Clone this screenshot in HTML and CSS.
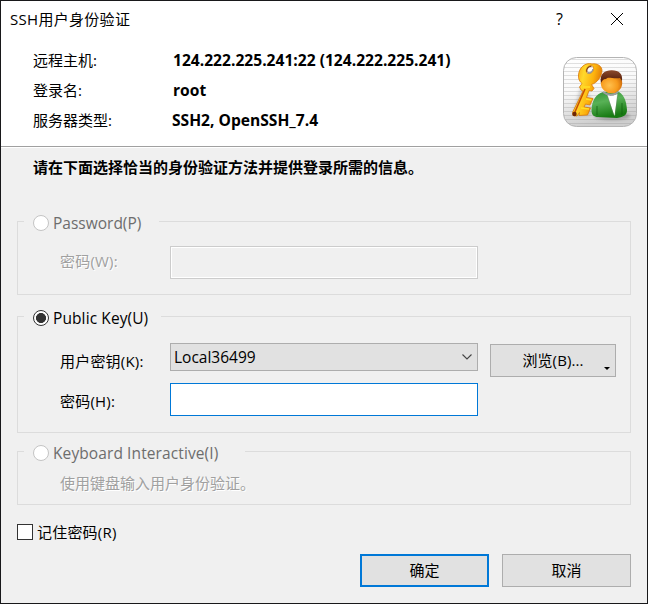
FILE: index.html
```html
<!DOCTYPE html>
<html lang="zh-CN">
<head>
<meta charset="utf-8">
<title>SSH用户身份验证</title>
<link rel="stylesheet" href="styles.css">
</head>
<body>
<main class="dialog">
  <header class="top">
    <div class="titlebar">
      <span class="title">SSH用户身份验证</span>
      <span class="help">?</span>
      <svg class="close" width="12" height="12" viewBox="0 0 12 12"><path d="M0 0L12 12M12 0L0 12" stroke="#000" stroke-width="1"/></svg>
    </div>
    <div class="summary">
      <dl class="info">
        <dt>远程主机:</dt><dd class="host">124.222.225.241:22 (124.222.225.241)</dd>
        <dt>登录名:</dt><dd>root</dd>
        <dt>服务器类型:</dt><dd class="server">SSH2, OpenSSH_7.4</dd>
      </dl>
      <svg class="badge" width="74" height="70" viewBox="0 0 74 70">
        <defs>
          <linearGradient id="plate" x1="0" y1="0" x2="0.25" y2="1"><stop offset="0" stop-color="#fff"/><stop offset=".5" stop-color="#f9f9f9"/><stop offset="1" stop-color="#cecece"/></linearGradient>
          <pattern id="lines" width="4" height="4" patternUnits="userSpaceOnUse"><rect y="2" width="4" height="1" fill="#777" opacity=".22"/></pattern>
          <linearGradient id="gold" x1="0" y1="0" x2="1" y2=".4"><stop offset="0" stop-color="#f58a08"/><stop offset=".4" stop-color="#ffd92b"/><stop offset=".7" stop-color="#fdb20e"/><stop offset="1" stop-color="#d96a04"/></linearGradient>
          <radialGradient id="face" cx=".4" cy=".62" r=".65"><stop offset="0" stop-color="#ffc04d"/><stop offset=".6" stop-color="#f79a1c"/><stop offset="1" stop-color="#c9660a"/></radialGradient>
          <linearGradient id="hair" x1="0" y1="0" x2="0" y2="1"><stop offset="0" stop-color="#8b4a2c"/><stop offset="1" stop-color="#481404"/></linearGradient>
          <linearGradient id="coat" x1="0" y1="0" x2=".3" y2="1"><stop offset="0" stop-color="#2c8f32"/><stop offset=".45" stop-color="#58b156"/><stop offset="1" stop-color="#177a12"/></linearGradient>
          <filter id="soft" x="-20%" y="-20%" width="140%" height="140%"><feGaussianBlur stdDeviation="1.5"/></filter>
        </defs>
        <rect x=".5" y=".5" width="73" height="69" rx="13" fill="url(#plate)"/>
        <rect x=".5" y=".5" width="73" height="69" rx="13" fill="url(#lines)" stroke="#b4b4b4"/>
        <ellipse cx="49" cy="59" rx="18" ry="4" fill="#555" opacity=".4" filter="url(#soft)"/>
        <path d="M17 31L10 57L14 60L27 59L29 50L24 47L29 42L25 37L27 33Z" fill="#777" opacity=".3" filter="url(#soft)"/>
        <path fill="url(#gold)" stroke="#d97807" stroke-width=".8" stroke-linejoin="round" fill-rule="evenodd" d="M29 7C22 5 16 11 15.500 18C15 22 17 25 19 26.500L16.500 30L18 33L20 34L9.500 55.500L10 58.500L14 59L16.500 55.500L16 58.500L24.500 58L27.500 51L21 50L22.500 47L27 48L30 41.500L23.500 40.500L26 33.500L29 34L31 31.500L28.500 27.500C34 26 38.500 20 39 14C39.200 9 34 6 29 7ZM26 9C29 7.500 31 9.500 30.500 12.500C30 15.500 26.500 17.500 24.300 16C22.200 14.300 23.500 10.500 26 9Z"/>
        <path d="M24 15C22.800 12 26 8.500 28.500 9.500" fill="none" stroke="#8a4a10" stroke-width="1.200"/>
        <path d="M24.500 15.500C27 17 29.500 15 30 12" fill="none" stroke="#999" stroke-width="1.500"/>
        <path d="M22 32L11.500 56" stroke="#c64c04" stroke-width="1.600"/>
        <path d="M20 30H27M18 51L26 52M23 42L28.500 43" stroke="#ffdf26" stroke-width="1.500"/>
        <circle cx="11.500" cy="57" r="2.200" fill="#6d2606"/>
        <path d="M40 35C33 37 29 43 28.500 53C28.400 58 31 60 35 60L54 61C61 60 64 58 64 53C63.500 43 60 36 54 34Z" fill="url(#coat)"/>
        <path d="M44 37L51.500 59L54.500 37L50 38.500Z" fill="#fff"/>
        <path d="M44 37L50.500 58M54.500 37L52.500 58" stroke="#777" stroke-width=".7" opacity=".45"/>
        <path d="M34 49V58M59 46V58" stroke="#105f10" stroke-width="1.200" opacity=".6"/>
        <path d="M40 35Q48 41 55 35" fill="none" stroke="#9a9ca0" stroke-width="1.800"/>
        <ellipse cx="48.500" cy="26" rx="10.700" ry="10.300" fill="url(#face)"/>
        <path d="M38 26C36 16 43 13 49 13.300C56 13.300 60 17 59 24L57 21C49 22 45 19 43 22C40 22 39 24 38 26Z" fill="url(#hair)"/>
      </svg>
    </div>
  </header>

  <form class="body">
    <p class="prompt">请在下面选择恰当的身份验证方法并提供登录所需的信息。</p>

    <section class="group password">
      <div class="legend disabled"><i class="radio"></i><span class="latin">Password(P)</span></div>
      <div class="row">
        <span class="label etched">密码(W):</span>
        <div class="field off"></div>
      </div>
    </section>

    <section class="group public-key">
      <div class="legend"><i class="radio on"></i><span class="latin wide">Public Key(U)</span></div>
      <div class="row key-row">
        <span class="label">用户密钥(K):</span>
        <div class="select"><span class="latin">Local36499</span>
          <svg width="10" height="6" viewBox="0 0 10 6"><path d="M.5 .5L5 5L9.500 .5" fill="none" stroke="#444" stroke-width="1.100"/></svg>
        </div>
        <div class="button browse">浏览(B)...<i class="arrow"></i></div>
      </div>
      <div class="row">
        <span class="label">密码(H):</span>
        <div class="field focus"></div>
      </div>
    </section>

    <section class="group keyboard">
      <div class="legend disabled"><i class="radio"></i><span class="latin wide">Keyboard Interactive(I)</span></div>
      <p class="note etched">使用键盘输入用户身份验证。</p>
    </section>

    <div class="remember"><i class="checkbox"></i><span>记住密码(R)</span></div>
    <div class="actions">
      <div class="button default">确定</div>
      <div class="button">取消</div>
    </div>
  </form>
</main>
</body>
</html>
```
FILE: styles.css
```css
* { box-sizing: border-box; }
body, p, dl, dd { margin: 0; }
body {
  font: 15px/20px "Open Sans", "Noto Sans CJK SC", sans-serif;
  color: #000;
}
.dialog {
  width: 648px;
  height: 604px;
  border: 1px solid #18181a;
  background: #f0f0f0;
  overflow: hidden;
  white-space: nowrap;
}
.top {
  height: 147px;
  background: #fff;
  border-bottom: 1px solid #fff;
  box-shadow: inset 0 -1px #a0a0a0;
}
.titlebar {
  height: 44px;
  display: flex;
  align-items: flex-start;
  padding: 8px 24px 0 9px;
}
.title { flex: 1; letter-spacing: .3px; }
.help { width: 9px; margin-right: 46px; font-size: 16px; }
.close { margin-top: 4px; overflow: visible; }
.summary { display: flex; justify-content: space-between; padding: 0 10px 0 32px; }
.info {
  display: grid;
  grid-template-columns: 140px 300px;
  grid-auto-rows: 30px;
  line-height: 30px;
}
.info dd { font-weight: 700; font-size: 15.6px; }
.info .server { margin-left: -1px; }
.badge { margin-top: 12px; }

.body { padding: 9px 16px 0; }
.prompt { padding-left: 16px; font-weight: 700; }
.group { border: 1px solid #dcdcdc; width: 614px; }
.password { height: 74px; margin-top: 44px; }
.public-key { height: 117px; margin-top: 21px; }
.keyboard { height: 54px; margin-top: 18px; }
.legend {
  display: flex;
  align-items: center;
  height: 20px;
  margin: -9px 0 0 6px;
  padding-left: 9px;
  gap: 4px;
  background: #f0f0f0;
}
.password .legend { width: 135px; }
.public-key .legend { width: 137px; }
.keyboard .legend { width: 221px; }
.latin { font-size: 15.5px; }
.wide { letter-spacing: .1px; }
.disabled { color: #6d6d6d; }
.etched { color: #a0a0a0; text-shadow: 1px 1px #fff; }
.radio {
  width: 16px;
  height: 16px;
  border: 1px solid #c4c4c4;
  border-radius: 50%;
  background: #fff;
}
.radio.on { border-color: #333; background: radial-gradient(circle, #333 4.700px, #fff 5.300px); }
.row { display: flex; padding-left: 42px; }
.password .row { padding-top: 13px; }
.key-row { height: 55px; padding-top: 15px; }
.label { width: 110px; line-height: 30px; letter-spacing: .2px; }
.key-row .label { padding-top: 3px; }
.public-key .row:last-child .label { padding-top: 3px; }
.field { width: 308px; height: 33px; background: #fff; }
.off { border: 1px solid #ccc; background: #f0f0f0; box-shadow: inset 0 0 0 1px #fff; }
.focus { border: 1px solid #0078d7; }
.select {
  display: flex;
  align-items: center;
  justify-content: space-between;
  width: 308px;
  height: 28px;
  padding: 0 5px 0 3px;
  border: 1px solid #adadad;
  background: #e1e1e1;
}
.button {
  width: 129px;
  height: 33px;
  border: 1px solid #adadad;
  background: #e1e1e1;
  line-height: 31px;
  text-align: center;
}
.browse { position: relative; width: 126px; margin: 1px 0 0 12px; letter-spacing: .1px; }
.arrow {
  position: absolute;
  right: 5px;
  bottom: 6px;
  border: solid transparent;
  border-width: 3px 3px 0;
  border-top-color: #000;
}
.default { border: 2px solid #0078d7; line-height: 29px; }
.note { padding: 10px 0 0 42px; }
.remember { display: flex; align-items: center; gap: 4px; height: 20px; margin-top: 17px; letter-spacing: .2px; }
.checkbox { width: 16px; height: 16px; border: 1px solid #333; background: #fff; }
.actions { display: flex; gap: 13px; margin: 12px 0 0 343px; }
```
